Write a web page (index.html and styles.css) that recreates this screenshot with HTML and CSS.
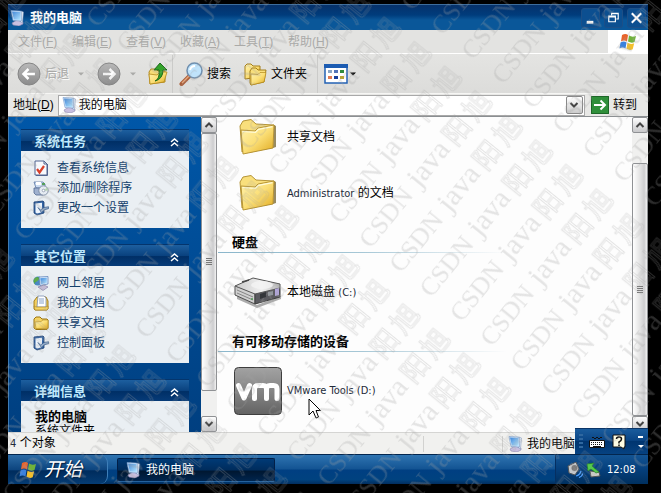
FILE: index.html
```html
<!DOCTYPE html>
<html lang="zh-CN">
<head>
<meta charset="utf-8">
<title>我的电脑</title>
<link rel="stylesheet" href="styles.css">
</head>
<body>
<svg class="defs" aria-hidden="true">
  <defs>
    <linearGradient id="gFolder" x1="0" y1="0" x2="1" y2="1"><stop offset="0" stop-color="#fff3b0"/><stop offset=".5" stop-color="#fbdf77"/><stop offset="1" stop-color="#e0a91e"/></linearGradient>
    <linearGradient id="gScreen" x1="0" y1="0" x2="1" y2="1"><stop offset="0" stop-color="#3f86d8"/><stop offset="1" stop-color="#b5e6ff"/></linearGradient>
    <linearGradient id="gRound" x1="0" y1="0" x2="0" y2="1"><stop offset="0" stop-color="#b9b9b9"/><stop offset="1" stop-color="#8b8b8b"/></linearGradient>
    <linearGradient id="gVm" x1="0" y1="0" x2="0" y2="1"><stop offset="0" stop-color="#a2a2a2"/><stop offset=".5" stop-color="#858585"/><stop offset="1" stop-color="#636363"/></linearGradient>
    <linearGradient id="gTop" x1="0" y1="0" x2="1" y2="0"><stop offset="0" stop-color="#c9c9c9"/><stop offset=".6" stop-color="#f1f1f1"/><stop offset="1" stop-color="#b5b5b5"/></linearGradient>
    <symbol id="computer" viewBox="0 0 16 16">
      <path d="M2 13l5-3 6 2v2l-4 2-6-1z" fill="#c9bfe0" stroke="#8d86ae" stroke-width=".6"/>
      <path d="M11 1l2.500 1-1 11-2-1z" fill="#dfe7f3" stroke="#7c92b8" stroke-width=".5"/>
      <path d="M1 .5l10 .6.4 10L3 10.500z" fill="#d5e9ff" stroke="#6c94c6" stroke-width=".6"/>
      <path d="M2 1.500l8.300.5.3 8-6.800-.6z" fill="url(#gScreen)"/>
    </symbol>
    <symbol id="folder" viewBox="0 0 38 38">
      <path d="M4 36l30-6 3-1V8l-2-1-1 22z" fill="#75642d" opacity=".75"/>
      <path d="M1 8l3-5 8-1.500 5 4.500 18 1v4L3 34z" fill="#f9df7c" stroke="#ad8a28" stroke-width=".9"/>
      <path d="M2 12l14 1 3-3 16-3-1 23-30 6z" fill="url(#gFolder)" stroke="#b18d2c" stroke-width=".9"/>
      <path d="M3.500 13.500l13 .8 3-3 14-2.700" fill="none" stroke="#fffbd8" stroke-width="1.200"/>
    </symbol>
    <symbol id="folder-small" viewBox="0 0 16 16">
      <path d="M1 13V4l2-2h4l2 2h5l1 1v8l-1 1.500H3z" fill="#f5d362" stroke="#9b7410" stroke-width="1"/>
      <path d="M2 7l6-.5 2-1.500h5v8.500H3z" fill="url(#gFolder)" stroke="#b48a1e" stroke-width=".6"/>
    </symbol>
    <symbol id="flag" viewBox="0 0 20 20">
      <path d="M4 3q3.500-2 6 0L9 9.500q-3-2-6 0z" fill="#e8642c"/>
      <path d="M11 3.500q3 2 7 .5l-1.500 6q-3 1.500-6.500-.5z" fill="#70b23a"/>
      <path d="M2.500 10.500q3.500-2 6 0l-1 6q-3-2-6 0z" fill="#3b81dd"/>
      <path d="M9.500 10.800q3 2 6.700.5l-1.500 6q-3 1.500-6.200-.5z" fill="#f3bf2c"/>
    </symbol>
    <symbol id="sysinfo" viewBox="0 0 16 16">
      <path d="M2 1h9l3 3v11H2z" fill="#f7f9fd" stroke="#53658f"/>
      <path d="M11 1v3h3M14.500 4v11.500H3" fill="none" stroke="#53658f"/>
      <path d="M4 9l2.500 3.500L11 6" fill="none" stroke="#d8402a" stroke-width="2.200"/>
    </symbol>
    <symbol id="programs" viewBox="0 0 16 16">
      <path d="M1 2h9l2 2v4H3z" fill="#c9daf0" stroke="#5d79a4" stroke-width=".8"/>
      <path d="M3 2h5v3H3z" fill="#fff"/><path d="M9 3h3v2H9z" fill="#55a05a"/>
      <path d="M1 8h9v7H3l-2-2z" fill="#9fb1cf" stroke="#52688f" stroke-width=".8"/>
      <circle cx="10.500" cy="10.500" r="4.700" fill="#e5ebf2" stroke="#6f7d97" stroke-width=".8"/>
      <path d="M10.500 10.500L14 7.500l1 3z" fill="#b8e0b0"/><circle cx="10.500" cy="10.500" r="1.300" fill="#fff" stroke="#6f7d97" stroke-width=".6"/>
    </symbol>
    <symbol id="control" viewBox="0 0 16 16">
      <path d="M1 2l9-1 1 1v11l-7 2-3-2z" fill="#3465a5" stroke="#1c3f72" stroke-width=".8"/>
      <path d="M2.500 3.500l6.500-.7v9.400l-5 1.300-1.500-1z" fill="#eef5fd"/>
      <path d="M5 7.500l2.500 2.500 3.500-2.500 4.500-.8v2l-4 1-3 3z" fill="#94acc8" stroke="#254a7c" stroke-width=".6"/>
    </symbol>
    <symbol id="network" viewBox="0 0 16 16">
      <circle cx="5" cy="6" r="4.600" fill="#3e85c8"/><path d="M2 3q3-2 4 0T3 7 2 9Q-1 6 2 3z" fill="#57ac3c"/>
      <path d="M6 2l9-.5V9l-8 1.500z" fill="#dcecff" stroke="#5379b1" stroke-width=".7"/><path d="M7.300 3.200l6.500-.4v5.300L8 9.200z" fill="url(#gScreen)"/>
      <path d="M5 12l6-2 4 2-5 3.500z" fill="#c8bfdb" stroke="#7b739b" stroke-width=".6"/>
    </symbol>
    <symbol id="documents" viewBox="0 0 16 16">
      <path d="M1 6l3-4h9l2 4v8l-1 1H2l-1-1z" fill="#f2ce5f" stroke="#9b7410" stroke-width=".9"/>
      <path d="M5 1h6l2 2v9H4z" fill="#fff" stroke="#6c83a9" stroke-width=".7"/><path d="M6 4h5M6 6h5M6 8h5" stroke="#87a3cb"/>
      <path d="M1 11l2 1h10l2-1v3l-1 1H2z" fill="#f5d566" stroke="#a9811c" stroke-width=".6"/>
    </symbol>
    <symbol id="chevrons" viewBox="0 0 9 9"><path d="M1 4l3.500-3L8 4M1 8l3.500-3L8 8" fill="none" stroke="#fff" stroke-width="1.500"/></symbol>
    <symbol id="up" viewBox="0 0 10 10"><path d="M1.500 7L5 3.500 8.500 7" fill="none" stroke="#444" stroke-width="2"/></symbol>
    <symbol id="down" viewBox="0 0 10 10"><path d="M1.500 3L5 6.500 8.500 3" fill="none" stroke="#444" stroke-width="2"/></symbol>
    <symbol id="caret" viewBox="0 0 6 4"><path d="M0 .5h6L3 3.500z" fill="currentColor"/></symbol>
  </defs>
</svg>

<div class="desktop">
  <header class="titlebar">
    <svg class="i16"><use href="#computer"/></svg>
    <h1>我的电脑</h1>
    <button class="winbtn" aria-label="最小化"><svg viewBox="0 0 18 18"><path d="M5 13.500h7" stroke="#fff" stroke-width="3"/></svg></button>
    <button class="winbtn" aria-label="还原"><svg viewBox="0 0 18 18"><path d="M7 6V4h7v6h-2M4 7h7v6H4zM4 8h7M7 4.500h7" fill="none" stroke="#fff" stroke-width="1.200"/></svg></button>
    <button class="winbtn" aria-label="关闭"><svg viewBox="0 0 18 18"><path d="M4 4l10 10M14 4L4 14" stroke="#fff" stroke-width="2.200"/></svg></button>
  </header>

  <nav class="menubar">
    <button>文件(<u>F</u>)</button><button>编辑(<u>E</u>)</button><button>查看(<u>V</u>)</button><button>收藏(<u>A</u>)</button><button>工具(<u>T</u>)</button><button>帮助(<u>H</u>)</button>
    <span class="brand"><svg><use href="#flag"/></svg></span>
  </nav>

  <div class="toolbar">
    <button class="tool off"><svg class="i24" viewBox="0 0 24 24"><circle cx="12" cy="12" r="11" fill="url(#gRound)" stroke="#858585"/><path d="M18 12H7M11.500 7l-5 5 5 5" fill="none" stroke="#fff" stroke-width="2.500"/></svg>后退</button>
    <svg class="caret off"><use href="#caret"/></svg>
    <button class="tool off" aria-label="前进"><svg class="i24" viewBox="0 0 24 24"><circle cx="12" cy="12" r="11" fill="url(#gRound)" stroke="#858585"/><path d="M6 12h11M12.500 7l5 5-5 5" fill="none" stroke="#fff" stroke-width="2.500"/></svg></button>
    <svg class="caret off near"><use href="#caret"/></svg>
    <button class="tool" aria-label="向上"><svg class="i24" viewBox="0 0 24 24"><path d="M3 10l2-3h5l2 2h7v11L4 22z" fill="#f7dc75" stroke="#b48a1e"/><path d="M3 12l8 1 3-3h7l-3 10-14 2z" fill="url(#gFolder)" stroke="#b48a1e" stroke-width=".8"/><path d="M9 19q5-2 4-11H8l6-7 7 7h-4q0 9-8 11z" fill="#34a32b" stroke="#146015" stroke-width=".9"/></svg></button>
    <span class="sep"></span>
    <button class="tool"><svg class="i24" viewBox="0 0 24 24"><path d="M2.500 22l8-8" stroke="#a95c37" stroke-width="4" stroke-linecap="round"/><path d="M3 21l7-7" stroke="#e8a77d" stroke-width="1.500"/><circle cx="15.500" cy="8.500" r="7.500" fill="#bfe3fb" stroke="#6f8fae" stroke-width="1.500"/><path d="M11 8q1-4 5-4" fill="none" stroke="#fff" stroke-width="2"/></svg>搜索</button>
    <button class="tool wide"><svg class="i24" viewBox="0 0 24 24"><path d="M2 17V4l2-2h4l2 2h7v11z" fill="url(#gFolder)" stroke="#a57f1b"/><path d="M7 21V9l2-3h4l2 2h8l-2 12-13 3z" fill="#f9e07c" stroke="#a57f1b"/><path d="M8 12l7 .5 2-2h6l-2 9.500-13 3z" fill="url(#gFolder)" stroke="#b48a1e" stroke-width=".7"/></svg>文件夹</button>
    <span class="sep spaced"></span>
    <button class="tool" aria-label="查看"><svg class="i24" viewBox="0 0 24 24"><path d="M1 3h22v18H1z" fill="#fff" stroke="#2362b4" stroke-width="1.500"/><path d="M0 2h24v4H0z" fill="#1c5cb2"/><path d="M4 8h4v3H4z" fill="#8ba6c5"/><path d="M10 8h4v3h-4z" fill="#5374b8"/><path d="M16 8h4v3h-4z" fill="#2f8a3b"/><path d="M4 14h4v3H4z" fill="#e07b54"/><path d="M10 14h4v3h-4z" fill="#183f9b"/><path d="M16 14h4v3h-4z" fill="#b8a435"/></svg></button>
    <svg class="caret last"><use href="#caret"/></svg>
  </div>

  <div class="address">
    <label for="addr">地址(<u>D</u>)</label>
    <div class="combo">
      <svg class="i16"><use href="#computer"/></svg>
      <input id="addr" type="text" value="我的电脑">
      <button class="drop" aria-label="展开"><svg><use href="#down"/></svg></button>
    </div>
    <button class="go"><svg class="goicon" viewBox="0 0 18 18"><path d="M0 0h18v18H0z" fill="#2f8f3a"/><path d="M.5.5h17v17H.5z" fill="none" stroke="#1d6628"/><path d="M3 9h11M9.500 4.500L14 9l-4.500 4.500" fill="none" stroke="#fff" stroke-width="2"/></svg>转到</button>
  </div>

  <div class="explorer">
    <aside class="tasks">
      <section class="panel">
        <h2>系统任务<svg><use href="#chevrons"/></svg></h2>
        <ul>
          <li><a href="#"><svg class="i16"><use href="#sysinfo"/></svg>查看系统信息</a></li>
          <li><a href="#"><svg class="i16"><use href="#programs"/></svg>添加/删除程序</a></li>
          <li><a href="#"><svg class="i16"><use href="#control"/></svg>更改一个设置</a></li>
        </ul>
      </section>
      <section class="panel">
        <h2>其它位置<svg><use href="#chevrons"/></svg></h2>
        <ul>
          <li><a href="#"><svg class="i16"><use href="#network"/></svg>网上邻居</a></li>
          <li><a href="#"><svg class="i16"><use href="#documents"/></svg>我的文档</a></li>
          <li><a href="#"><svg class="i16"><use href="#folder-small"/></svg>共享文档</a></li>
          <li><a href="#"><svg class="i16"><use href="#control"/></svg>控制面板</a></li>
        </ul>
      </section>
      <section class="panel">
        <h2>详细信息<svg><use href="#chevrons"/></svg></h2>
        <div class="details"><strong>我的电脑</strong><span>系统文件夹</span></div>
      </section>
    </aside>
    <div class="scroll side">
      <button aria-label="向上滚动"><svg><use href="#up"/></svg></button>
      <div class="track"><div class="thumb"><i></i></div></div>
      <button aria-label="向下滚动"><svg><use href="#down"/></svg></button>
    </div>
    <main class="files">
      <ul class="items first">
        <li><svg class="i38"><use href="#folder"/></svg><span>共享文档</span></li>
        <li><svg class="i38"><use href="#folder"/></svg><span><span class="latin">Administrator</span> 的文档</span></li>
      </ul>
      <h2>硬盘</h2>
      <ul class="items">
        <li><svg class="i48" viewBox="0 0 48 48">
          <path d="M3 28l20 9 24-9v3l-24 9-20-9z" fill="#777" opacity=".6"/>
          <path d="M1 18v9l20 9V24z" fill="#d0d0d0" stroke="#4b4b4b"/>
          <path d="M21 24v12l25-7v-9z" fill="#5b5b60" stroke="#3e3e3e"/>
          <path d="M1 18l18-8 27 6v4l-25 6z" fill="url(#gTop)" stroke="#555"/>
          <ellipse cx="28" cy="17" rx="11" ry="4" fill="#f4f4f4" opacity=".8"/>
          <path d="M8 14l7-2" stroke="#444" stroke-width="1.500"/><path d="M3 22l16 7M3 25l16 7" stroke="#858585"/>
          <path d="M26 26l6-2v5l-6 2z" fill="#34363a"/><path d="M34 24l5-1v4l-5 1z" fill="#90959b"/><path d="M41 21l4-1v7l-4 1z" fill="#b1a5dc"/><circle cx="18" cy="31" r="1" fill="#4f9b54"/>
        </svg><span>本地磁盘 <span class="latin">(C:)</span></span></li>
      </ul>
      <h2>有可移动存储的设备</h2>
      <ul class="items">
        <li><svg class="i48" viewBox="0 0 48 48">
          <rect x=".5" y=".5" width="47" height="47" rx="4" fill="url(#gVm)" stroke="#3e3e3e"/>
          <path d="M4.500 18.500l5.500 12.500L15.500 18.500M20.500 31.500V22q0-3.500 3.500-3.500h5q3.500 0 3.500 3.500v9.500M32.500 22q0-3.500 3.500-3.500h3.500q3.500 0 3.500 3.500v9.500" fill="none" stroke="#fff" stroke-width="5" stroke-linejoin="round" stroke-linecap="round"/>
        </svg><span class="latin">VMware Tools (D:)</span></li>
      </ul>
      <svg class="cursor" viewBox="0 0 13 21"><path d="M1 1v16l4-4 3 7 2.500-1L8 12.500h4.500z" fill="#fff" stroke="#000"/></svg>
    </main>
    <div class="scroll content">
      <button aria-label="向上滚动"><svg><use href="#up"/></svg></button>
      <div class="track"><div class="thumb"><i></i></div></div>
      <button aria-label="向下滚动"><svg><use href="#down"/></svg></button>
    </div>
  </div>

  <footer class="status">
    <span class="count"><span class="latin">4</span> 个对象</span>
    <span class="cell"></span>
    <span class="place"><svg class="i16"><use href="#computer"/></svg>我的电脑</span>
    <div class="langbar">
      <i class="grip"></i>
      <svg viewBox="0 0 16 16"><path d="M3 4q1-2 2 0t2 0 2 0 2 0 2 0" fill="none" stroke="#111"/><path d="M.5 6.500h15v7H.5z" fill="#fff" stroke="#111"/><path d="M2 8.500h12M2 10.500h12" stroke="#111" stroke-dasharray="1 1"/><path d="M4 12.500h8" stroke="#111"/></svg>
      <svg viewBox="0 0 16 16"><path d="M2 1h12v12h-1v2l-3-2H2z" fill="#fffde4" stroke="#111"/><path d="M5.500 5q0-2 2.500-2t2.500 2T8 8v1.500M8 10.500v1.500" fill="none" stroke="#111" stroke-width="1.500"/></svg>
      <svg class="more" viewBox="0 0 8 16"><path d="M1 3h5" stroke="#fff" stroke-width="2"/><path d="M1 11h6l-3 3z" fill="#fff"/></svg>
    </div>
  </footer>

  <div class="taskbar">
    <button class="start"><svg><use href="#flag"/></svg>开始</button>
    <button class="task"><svg class="i16"><use href="#computer"/></svg>我的电脑</button>
    <div class="tray">
      <svg viewBox="0 0 16 16"><path d="M1 4l8-4 3 7-4 6-6-2z" fill="#c4c7ca" stroke="#4f5358"/><circle cx="7.500" cy="6" r="3" fill="#777"/><path d="M9 14q4-1 5-5M12 15.500q3-1 4-4" fill="none" stroke="#4b9fff" stroke-width="1.200"/></svg>
      <svg viewBox="0 0 16 16"><path d="M4 9l9 1 1 4-9 1z" fill="#cdcfc9" stroke="#555"/><path d="M10 11L5 7 2 9 1 2l7-1-2 3 7 6z" fill="#49cf3f" stroke="#1c7a1e" stroke-width=".7"/></svg>
      <time class="latin">12:08</time>
    </div>
  </div>
</div>

<svg class="watermark" aria-hidden="true">
  <defs>
    <pattern id="mark" width="211" height="39" patternUnits="userSpaceOnUse" patternTransform="translate(380 257) rotate(-51)">
      <text class="caps" x="0" y="27">CSDN</text>
      <text class="low" x="78" y="27">java</text>
      <text class="han" x="133" y="29">阳</text>
      <text class="han" x="165" y="29">旭</text>
    </pattern>
  </defs>
  <rect width="100%" height="100%" fill="url(#mark)"/>
</svg>
</body>
</html>
```
FILE: styles.css
```css
* { box-sizing: border-box; }
body {
  margin: 0;
  height: 100vh;
  padding: 4px 13px 9px 8px;
  background: #000;
  color: #000;
  font: 12px/16px "Liberation Sans", "Noto Sans CJK SC", sans-serif;
  overflow: hidden;
  position: relative;
}
button { border: 0; padding: 0; margin: 0; background: none; font: inherit; color: inherit; }
ul { list-style: none; margin: 0; padding: 0; }
h1, h2 { margin: 0; font-size: 13px; line-height: 16px; }
a { color: inherit; text-decoration: none; }
svg { display: block; flex: none; }
.defs { position: absolute; width: 0; height: 0; }
.latin { font-family: "DejaVu Sans Condensed", "Noto Sans", sans-serif; font-size: 11px; color: #222a38; }
.i16 { width: 16px; height: 16px; }
.i24 { width: 24px; height: 24px; }
.i38 { width: 38px; height: 38px; margin: 0 5px; }
.i48 { width: 48px; height: 48px; }

.desktop { height: 100%; display: flex; flex-direction: column; }
.desktop > * { flex: none; }

.titlebar {
  height: 26px;
  display: flex;
  align-items: center;
  gap: 4px;
  padding: 0 2px 0 2px;
  color: #fff;
  border-top: 1px solid #3c6c9c;
  background: linear-gradient(#06316a, #003c7c 40%, #0a5799 60%, #0a5799);
}
.titlebar h1 { flex: 1; }
.winbtn { width: 19px; height: 20px; border: 1px solid #1c4f87; border-radius: 3px; background: #0c4f90; }
.winbtn svg { width: 17px; height: 18px; }

.menubar { height: 24px; display: flex; padding-left: 10px; background: #e3e3e1; border-bottom: 1px solid #fff; color: #aaaaa8; text-shadow: 1px 1px #fff; }
.menubar button { width: 54px; text-align: left; white-space: nowrap; }
.brand { margin-left: auto; width: 40px; background: #fff; display: grid; place-items: center; }
.brand svg { width: 20px; height: 20px; }

.toolbar { height: 40px; display: flex; align-items: center; padding-left: 9px; background: linear-gradient(#e4e4e2, #dcdcda); border-bottom: 1px solid #f6f6f4; }
.tool { display: flex; align-items: center; gap: 4px; }
.tool.wide { margin-left: 12px; }
.off { color: #aaaaa8; text-shadow: 1px 1px #fff; }
.caret { width: 6px; height: 4px; margin: 0 13px 0 9px; }
.caret.near { margin-right: 10px; }
.caret.last { margin: 0 0 0 2px; }
.sep { width: 1px; height: 38px; margin: 0 6px 0 2px; background: #cbcbc9; }
.sep.spaced { margin: 0 6px 0 10px; }

.address { height: 22px; display: flex; align-items: center; gap: 4px; padding: 0 11px 0 5px; background: #e8e8e6; }
.combo { flex: 1; height: 21px; display: flex; align-items: center; padding: 0 1px 0 3px; background: #fff; border: 1px solid #a9a9a9; }
.combo input { flex: 1; min-width: 0; border: 0; padding: 0 1px; background: none; font: inherit; outline: 0; }
.drop { width: 17px; height: 18px; display: grid; place-items: center; border: 1px solid #888; border-radius: 2px; background: linear-gradient(#fff, #ccc); }
.drop svg, .scroll svg { width: 10px; height: 10px; }
.go { display: flex; align-items: center; gap: 4px; margin-left: 2px; }
.goicon { width: 18px; height: 18px; }

.desktop > .explorer { flex: 1 1 0; min-height: 0; display: flex; overflow: hidden; background: #fdfdfd; border-top: 1px solid #8b8f92; }
.tasks { width: 193px; flex: none; overflow: hidden; padding: 12px 12px 0; display: flex; flex-direction: column; gap: 16px; background: linear-gradient(#0057a8, #003f80); border-left: 1px solid #3e7ab3; }
.panel { flex: none; }
.panel h2 { height: 22px; display: flex; justify-content: space-between; align-items: center; padding: 3px 10px 0 13px; color: #bfeaff; background: linear-gradient(#1d5f9f, #0a427f 50%, #002f66 55%, #063b78); border-top: 1px solid #04356d; }
.panel h2 svg { width: 9px; height: 9px; }
.panel ul { padding: 7px 12px 10px; background: #eaeff3; color: #12406b; }
.panel a { height: 20px; display: flex; align-items: center; gap: 8px; }
.details { display: flex; flex-direction: column; padding: 9px 14px 10px; background: #eaeff3; line-height: 14px; }
.details strong { font-size: 13px; }

.scroll { width: 16px; flex: none; display: flex; flex-direction: column; background: #f0f0ef; }
.scroll.side { margin-right: 1px; }
.scroll button { width: 16px; height: 16px; display: grid; place-items: center; border: 1px solid #8f9194; border-radius: 2px; background: linear-gradient(#fdfdfd, #c8c8ca); }
.track { flex: 1; display: flex; }
.thumb { width: 16px; display: grid; place-items: center; border: 1px solid #8f9194; border-radius: 2px; background: linear-gradient(90deg, #fff, #e3e3e3 50%, #cdcdcf 80%, #f2f2f2); }
.thumb i { width: 6px; height: 7px; background: repeating-linear-gradient(#777 0 1px, transparent 1px 2px); }
.side .thumb { height: 91%; }
.content .track { padding-top: 30px; }
.content .thumb { height: 100%; }

.files { flex: 1; min-width: 0; overflow: hidden; position: relative; }
.items li { height: 48px; display: flex; align-items: center; gap: 5px; padding-left: 16px; }
.items.first { display: flex; flex-direction: column; gap: 8px; margin-top: -4px; }
.files h2 { width: 288px; max-width: 100%; height: 18px; margin: 18px 0 15px; padding-left: 14px; border-bottom: 1px solid; border-image: linear-gradient(90deg, #8ab6cb, #a6c7d6 50%, transparent) 1; }
.cursor { position: absolute; left: 90px; top: 281px; width: 13px; height: 21px; }

.status { height: 22px; display: flex; align-items: center; position: relative; padding: 0 73px 0 2px; background: #f1f1ef; border-top: 1px solid #d5d5d3; white-space: nowrap; }
.count { flex: 1; }
.cell { width: 80px; height: 16px; border: solid #d2d2d0; border-width: 0 1px; }
.place { display: flex; align-items: center; gap: 3px; padding-left: 5px; }
.langbar { position: absolute; right: 0; bottom: 0; width: 73px; height: 26px; display: flex; align-items: center; gap: 6px; padding-left: 4px; background: linear-gradient(#1a5c9d, #0a4585 45%, #003570 50%, #064281); border-top: 1px solid #0a3467; }
.langbar svg { width: 16px; height: 16px; }
.langbar .more { width: 8px; margin-left: 4px; }
.grip { width: 4px; height: 16px; background: repeating-linear-gradient(#2f679f 0 2px, transparent 2px 4px); }

.taskbar { height: 30px; display: flex; align-items: center; color: #fff; border-top: 1px solid #03264e; background: linear-gradient(#2f74b1, #135493 48%, #003f82 52%, #00427f 85%, #022e5e); }
.start { width: 100px; height: 29px; display: flex; align-items: center; gap: 6px; padding-left: 10px; margin-right: 9px; font-size: 19px; line-height: 24px; font-style: italic; border-right: 1px solid #3e7fb9; border-radius: 0 8px 8px 0; background: linear-gradient(#2c6ba5, #0d457f 50%, #002c5d 55%, #053c73); text-shadow: 1px 1px 1px #001a3c; }
.start svg { width: 20px; height: 20px; }
.task { width: 158px; height: 24px; display: flex; align-items: center; gap: 4px; padding-left: 8px; border: 1px solid #021f47; border-bottom-color: #24619c; border-radius: 2px; background: linear-gradient(#003a76, #002c5c 50%, #001731 55%, #00254e); }
.tray { margin-left: auto; width: 93px; height: 29px; display: flex; align-items: center; gap: 3px; padding-left: 11px; border-left: 1px solid #052f61; background: linear-gradient(#135493, #053f7c 50%, #00305f); }
.tray svg { width: 16px; height: 16px; }
.tray time { color: #fff; margin-left: 2px; }

.watermark { position: absolute; inset: 0; width: 100%; height: 100%; pointer-events: none; }
.watermark text { fill: #a0a0a0; fill-opacity: .28; }
.watermark .han { fill: none; stroke: #a0a0a0; stroke-opacity: .28; stroke-width: 1px; }
.caps { font: 26px "Liberation Serif", serif; }
.low { font: 30px "Liberation Serif", serif; }
.han { font: 27px "Noto Sans CJK SC", sans-serif; }
```
